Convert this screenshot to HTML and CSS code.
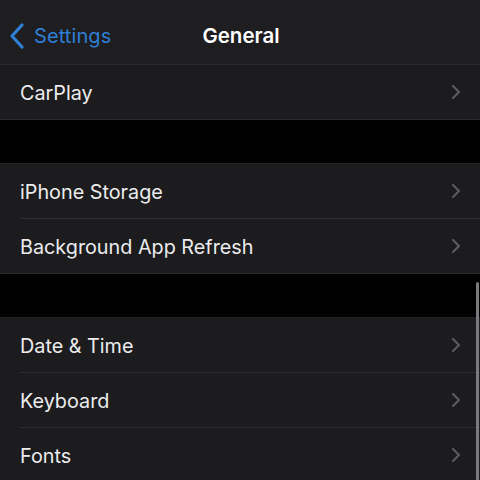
FILE: index.html
```html
<!DOCTYPE html>
<html>
<head>
<meta charset="utf-8">
<link rel="stylesheet" href="styles.css">
</head>
<body>
<div class="screen">
  <header class="nav">
    <div class="back">
      <svg class="back-icon" width="16" height="26" viewBox="0 0 16 26"><path d="M13 2 L3 13 L13 24" fill="none" stroke="#2f7fd6" stroke-width="3.2" stroke-linecap="round" stroke-linejoin="round"/></svg>
      <span class="back-label">Settings</span>
    </div>
    <div class="title">General</div>
  </header>
  <div class="content">
    <section class="group">
      <div class="row"><span class="label">CarPlay</span><svg class="chev" width="10" height="16" viewBox="0 0 10 16"><path d="M2 2 L8 8 L2 14" fill="none" stroke="#5b5b5f" stroke-width="2.2" stroke-linecap="round" stroke-linejoin="round"/></svg></div>
    </section>
    <div class="gap"></div>
    <section class="group">
      <div class="row"><span class="label">iPhone Storage</span><svg class="chev" width="10" height="16" viewBox="0 0 10 16"><path d="M2 2 L8 8 L2 14" fill="none" stroke="#5b5b5f" stroke-width="2.2" stroke-linecap="round" stroke-linejoin="round"/></svg></div>
      <div class="row"><span class="label">Background App Refresh</span><svg class="chev" width="10" height="16" viewBox="0 0 10 16"><path d="M2 2 L8 8 L2 14" fill="none" stroke="#5b5b5f" stroke-width="2.2" stroke-linecap="round" stroke-linejoin="round"/></svg></div>
    </section>
    <div class="gap"></div>
    <section class="group">
      <div class="row"><span class="label">Date &amp; Time</span><svg class="chev" width="10" height="16" viewBox="0 0 10 16"><path d="M2 2 L8 8 L2 14" fill="none" stroke="#5b5b5f" stroke-width="2.2" stroke-linecap="round" stroke-linejoin="round"/></svg></div>
      <div class="row"><span class="label">Keyboard</span><svg class="chev" width="10" height="16" viewBox="0 0 10 16"><path d="M2 2 L8 8 L2 14" fill="none" stroke="#5b5b5f" stroke-width="2.2" stroke-linecap="round" stroke-linejoin="round"/></svg></div>
      <div class="row"><span class="label">Fonts</span><svg class="chev" width="10" height="16" viewBox="0 0 10 16"><path d="M2 2 L8 8 L2 14" fill="none" stroke="#5b5b5f" stroke-width="2.2" stroke-linecap="round" stroke-linejoin="round"/></svg></div>
    </section>
  </div>
  <div class="scrollbar"></div>
</div>
</body>
</html>
```
FILE: styles.css
```css
* { box-sizing: border-box; }
html, body { margin: 0; padding: 0; background: #000; }
body { font-family: Inter, "Noto Sans", "Liberation Sans", sans-serif; -webkit-font-smoothing: antialiased; }
.screen { position: relative; width: 480px; height: 480px; overflow: hidden; background: #000; }
.nav {
  position: relative;
  height: 65px;
  background: #1e1e20;
  border-bottom: 1px solid #29292b;
  display: flex;
  align-items: center;
  padding-top: 7px;
}
.back { display: flex; align-items: center; gap: 9px; padding-left: 9px; }
.back-icon { display: block; }
.back-label { color: #2f7fd6; font-size: 20px; letter-spacing: 0.1px; }
.title {
  position: absolute;
  left: 0; right: 0; top: 7px; bottom: 0;
  display: flex; align-items: center; justify-content: center;
  color: #fff; font-size: 20.5px; font-weight: 600;
  padding-left: 2px;
  pointer-events: none;
}
.group { background: #1c1c1e; border-bottom: 1px solid #2c2c2e; }
.gap { height: 44px; background: #000; border-bottom: 1px solid #222224; }
.row {
  height: 55px;
  margin-left: 20px;
  padding-right: 19px;
  padding-top: 2px;
  display: flex; align-items: center; justify-content: space-between;
  border-bottom: 1px solid #2e2e30;
}
.row:last-child { border-bottom: none; height: 54px; }
.label { color: #ececee; font-size: 19.8px; letter-spacing: 0; }
.chev { display: block; margin-top: -2px; }
.scrollbar {
  position: absolute; right: 1px; top: 282px;
  width: 3px; height: 210px; border-radius: 2px; background: #7a7a7e;
}
```
